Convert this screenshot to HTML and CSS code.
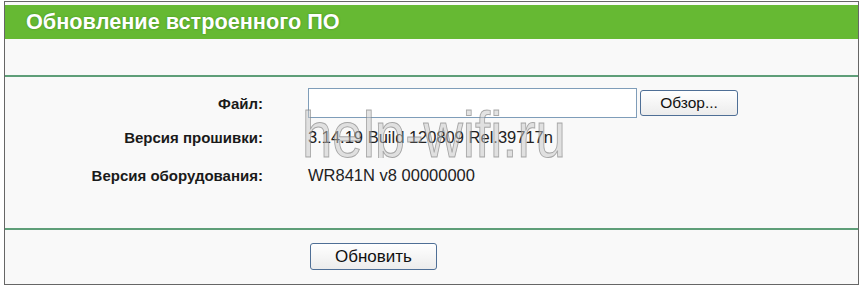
FILE: index.html
```html
<!DOCTYPE html>
<html lang="ru">

<head>
  <meta charset="UTF-8">
  <meta name="viewport" content="width=device-width, initial-scale=1.0">
  <title>Обновление встроенного ПО</title>
  <link rel="stylesheet" href="styles.css">
</head>

<body>
  <div class="panel">
    <div class="title">Обновление встроенного ПО</div>
    <div class="spacer"></div>
    <div class="rule"></div>

    <div class="form">
      <div class="label">Файл:</div>
      <div class="value file-row">
        <input class="file-input" type="text">
        <button class="btn browse" type="button">Обзор...</button>
      </div>

      <div class="label">Версия прошивки:</div>
      <div class="value">3.14.19 Build 120809 Rel.39717n</div>

      <div class="label">Версия оборудования:</div>
      <div class="value">WR841N v8 00000000</div>

      <div class="watermark"><span>help-wifi.ru</span></div>
    </div>

    <div class="rule"></div>

    <div class="footer">
      <button class="btn upgrade" type="button">Обновить</button>
    </div>
  </div>
</body>

</html>
```

FILE: styles.css
```css
body {
  margin: 0;
  padding: 1px 0 0 4px;
  background: #fff;
  font-family: "Liberation Sans", Arial, sans-serif;
}
.panel {
  width: 853px;
  border: 1px solid #666;
  background: #f9f9f9;
  padding-top: 3px;
}
.title {
  height: 34px;
  line-height: 34px;
  padding-left: 21px;
  background: #66b933;
  color: #fff;
  font-size: 21.7px;
  font-weight: bold;
  text-shadow: 0 0 2px #3f8a1c;
}
.spacer {
  height: 36px;
}
.rule {
  height: 2px;
  background: #5e9e78;
}
.form {
  position: relative;
  display: grid;
  grid-template-columns: 258px 1fr;
  grid-template-rows: 30px 38px 38px;
  column-gap: 45px;
  align-items: center;
  padding: 11px 0 34px;
}
.label {
  text-align: right;
  font-size: 15px;
  font-weight: bold;
  color: #1a1a1a;
}
.value {
  font-size: 16.5px;
  color: #222;
}
.file-row {
  display: flex;
  align-items: center;
  gap: 3px;
}
.file-input {
  box-sizing: border-box;
  width: 329px;
  height: 30px;
  margin: 0;
  border: 1px solid #7f9db9;
  background: #fff;
}
.btn {
  box-sizing: border-box;
  margin: 0;
  padding: 0;
  border: 1px solid #4f6f96;
  border-radius: 3px;
  background: linear-gradient(#fff, #ececec);
  color: #111;
  font-family: "Liberation Sans", Arial, sans-serif;
}
.browse {
  width: 98px;
  height: 26px;
  font-size: 15.5px;
}
/* watermark band, cut off under the baseline */
.watermark {
  position: absolute;
  left: 297px;
  top: 32px;
  width: 280px;
  height: 49px;
  overflow: hidden;
  pointer-events: none;
}
.watermark span {
  display: block;
  margin-top: -7px;
  font-size: 65px;
  line-height: 1;
  white-space: nowrap;
  color: rgba(200, 200, 200, 0.5);
  -webkit-text-stroke: 1px rgba(120, 120, 120, 0.6);
  transform: scaleX(0.84);
  transform-origin: left top;
}
.footer {
  padding: 13px 0 14px 305px;
}
.upgrade {
  width: 127px;
  height: 27px;
  font-size: 17px;
}
```
